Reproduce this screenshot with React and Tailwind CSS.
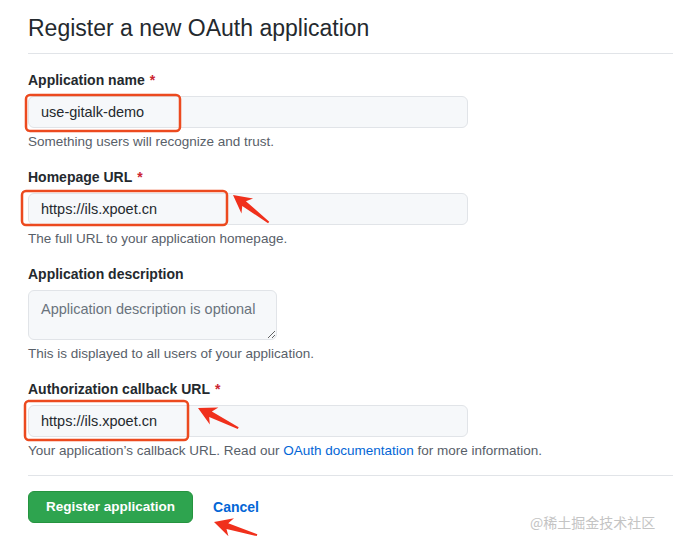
import React from "react";

const Field = ({ label, required, children, hint, className = "" }) => (
  <div className={className}>
    <label className="block text-[14px] leading-[20px] font-bold text-[#24292e] mb-[6px]">
      {label}
      {required && <span className="text-[#cb2431] ml-[5px]">*</span>}
    </label>
    {children}
    <p className="mt-[5px] text-[13.5px] leading-[18px] text-[#586069]">{hint}</p>
  </div>
);

const inputCls =
  "block w-[440px] h-[32px] px-[12px] text-[14.5px] text-[#24292e] bg-[#f6f8fa] border border-[#e1e4e8] rounded-[6px] outline-none";

// red annotation arrow, tip at origin pointing left
const arrow = "0,0 18,-9.5 14,-3 45,-1 45,1 14,3 18,9.5";

const App = () => {
  return (
    <div className="relative w-[673px] h-[545px] bg-white overflow-hidden font-['Liberation_Sans',Arial,sans-serif]">
      <div className="pl-[28px]">
        <h1 className="mt-[10px] pb-[7px] border-b border-[#e1e4e8] text-[23px] leading-[36px] font-normal text-[#24292e]">
          Register a new OAuth application
        </h1>

        <Field
          className="mt-[16px]"
          label="Application name"
          required
          hint="Something users will recognize and trust."
        >
          <input className={inputCls} defaultValue="use-gitalk-demo" readOnly />
        </Field>

        <Field
          className="mt-[16px]"
          label="Homepage URL"
          required
          hint="The full URL to your application homepage."
        >
          <input className={inputCls} defaultValue="https://ils.xpoet.cn" readOnly />
        </Field>

        <Field
          className="mt-[16px]"
          label="Application description"
          hint="This is displayed to all users of your application."
        >
          <textarea
            className="block w-[249px] h-[50px] px-[12px] py-[8px] text-[14.5px] leading-[20px] text-[#24292e] placeholder:text-[#6a737d] bg-[#f6f8fa] border border-[#e1e4e8] rounded-[6px] outline-none"
            placeholder="Application description is optional"
          />
        </Field>

        <Field
          className="mt-[16px]"
          label="Authorization callback URL"
          required
          hint={
            <>
              Your application’s callback URL. Read our{" "}
              <a href="#" className="text-[#0366d6]">
                OAuth documentation
              </a>{" "}
              for more information.
            </>
          }
        >
          <input className={inputCls} defaultValue="https://ils.xpoet.cn" readOnly />
        </Field>

        <div className="mt-[15px] border-t border-[#e1e4e8]" />

        <div className="mt-[15px] flex items-center gap-[20px]">
          <button className="h-[32px] px-[17px] rounded-[6px] bg-[#2ea44f] border border-[#25943f] text-white text-[13.5px] font-bold">
            Register application
          </button>
          <a href="#" className="text-[#0366d6] text-[14px] font-bold">
            Cancel
          </a>
        </div>
      </div>

      {/* watermark */}
      <div className="absolute left-[530px] top-[512px] text-[14px] leading-[20px] text-[#c4c4c4] font-['Noto_Sans_CJK_SC',sans-serif]">
        @稀土掘金技术社区
      </div>

      {/* annotations */}
      <svg className="absolute inset-0 pointer-events-none" width="673" height="545">
        <g fill="none" stroke="#ec4a1f" strokeWidth="2.5">
          <rect x="26" y="95" width="154" height="36" rx="4" />
          <rect x="22" y="191" width="205" height="34" rx="4" />
          <rect x="25" y="401" width="163" height="39" rx="4" />
        </g>
        <g fill="#f0301c">
          <polygon points={arrow} transform="translate(233 195) rotate(37.6)" />
          <polygon points={arrow} transform="translate(198 408) rotate(26.6)" />
          <polygon points={arrow} transform="translate(214 522) rotate(17)" />
        </g>
      </svg>
    </div>
  );
};

export default App;
